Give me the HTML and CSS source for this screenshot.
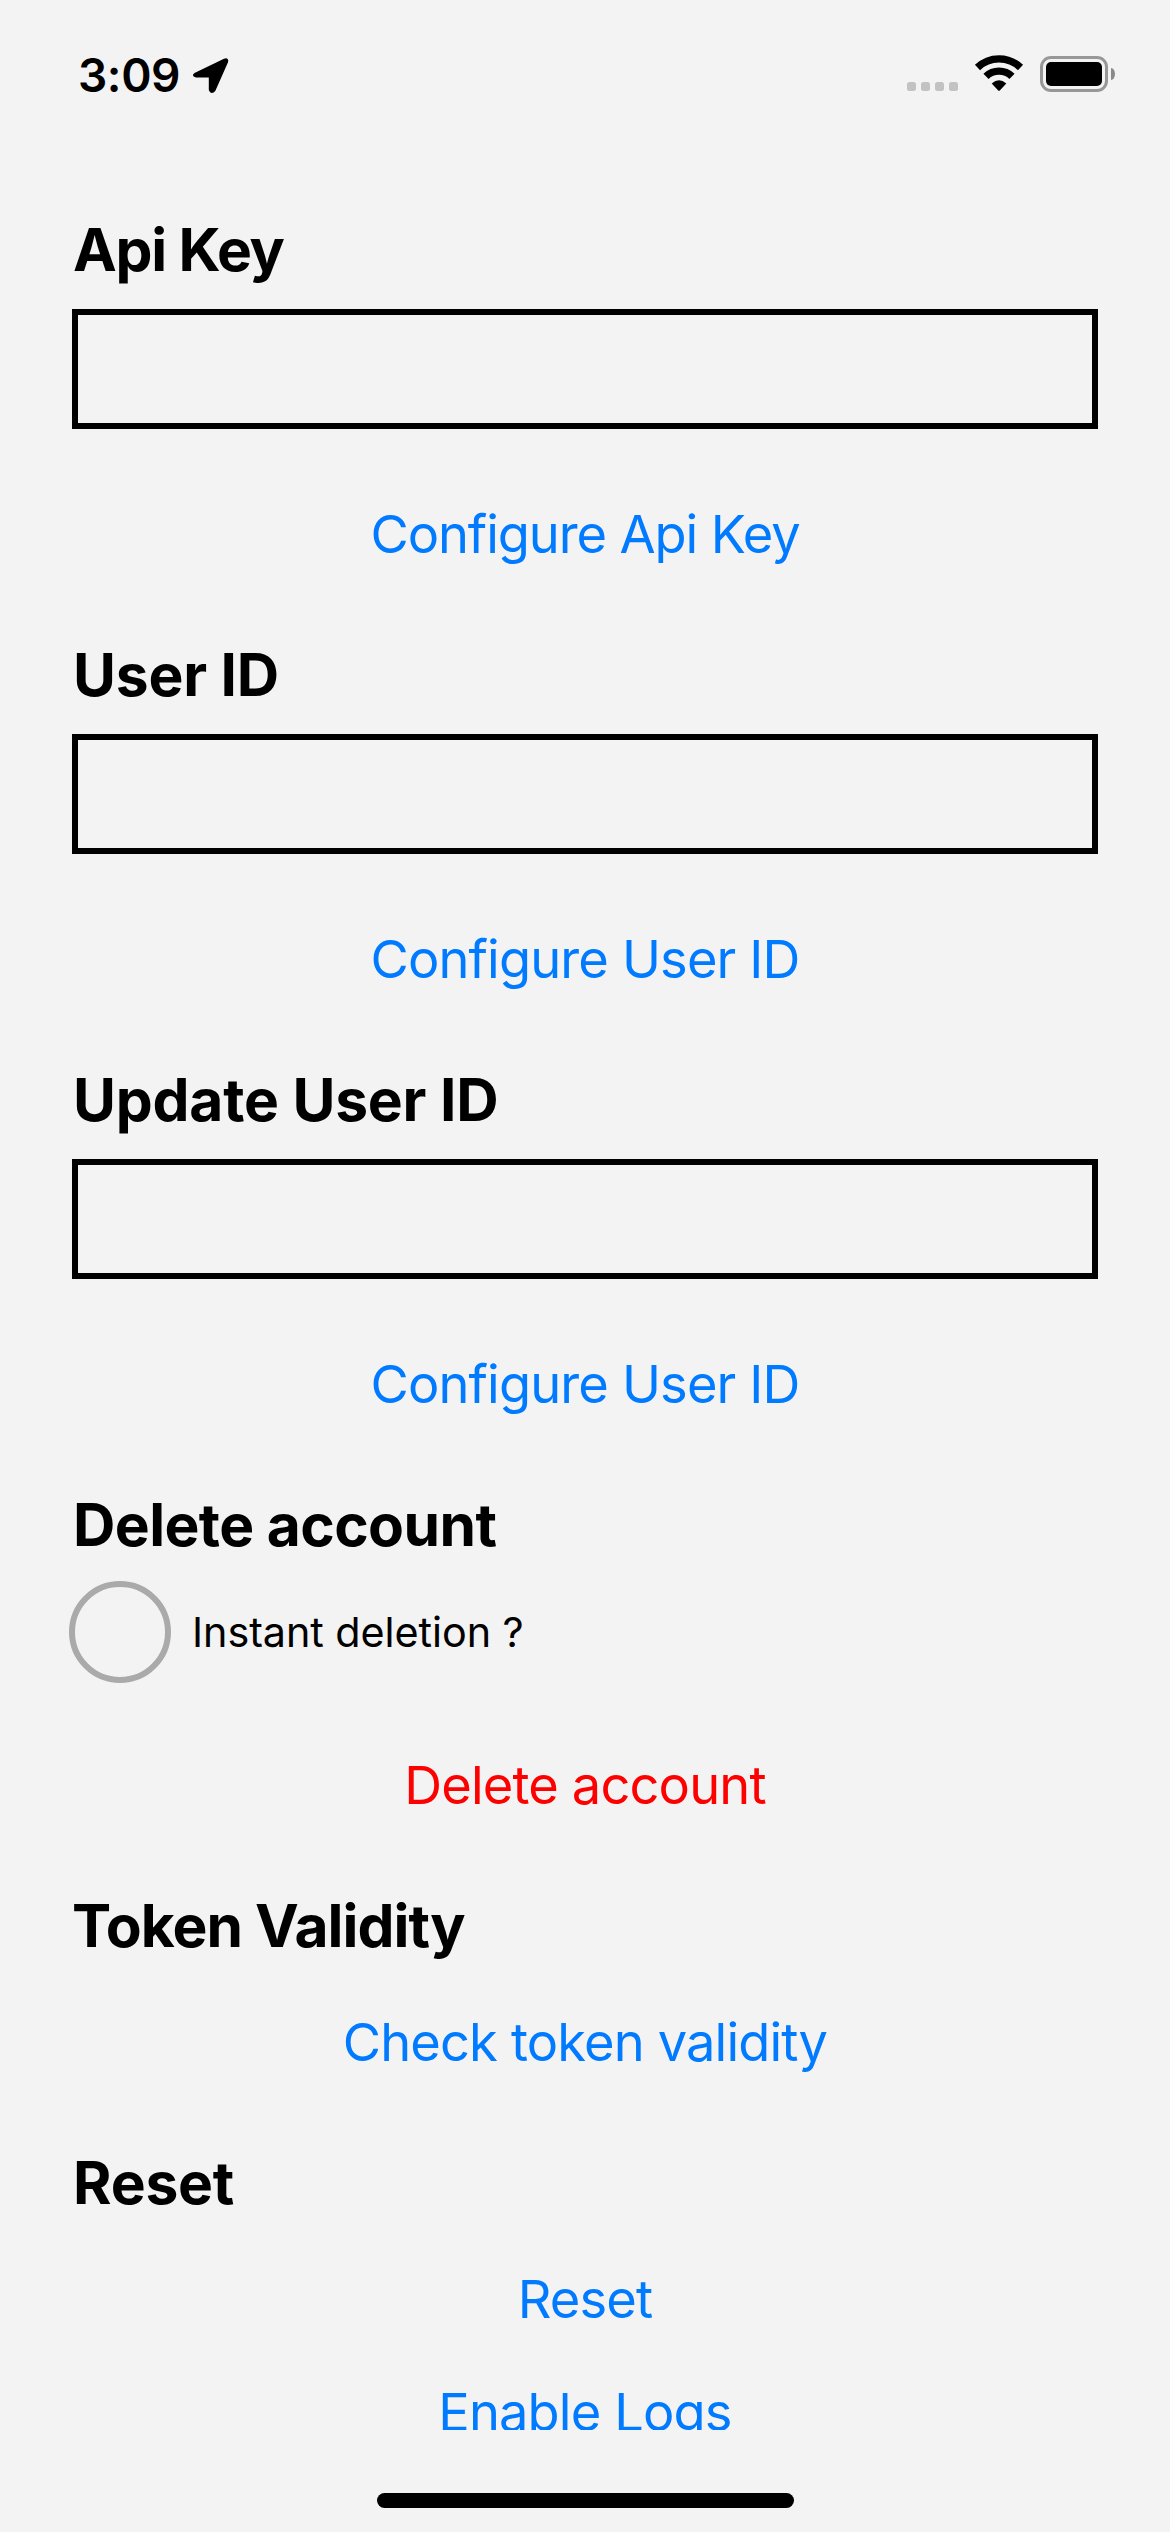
FILE: index.html
```html
<!DOCTYPE html>
<html lang="en">
<head>
<meta charset="utf-8">
<title>Account settings</title>
<link rel="stylesheet" href="styles.css">
</head>
<body>
<header class="status">
  <div class="clock">
    <span class="time">3:09</span>
    <svg class="location" width="38" height="38" viewBox="0 0 38 38"><path d="M3 17.2 32.5 2.8Q36 1.8 34.8 5L22.3 33.2Q19.5 36.6 18 32.8V19.2H4.2Q.8 18.6 3 17.2Z" stroke="#000" stroke-width="2.4" stroke-linejoin="round"/></svg>
  </div>
  <div class="indicators">
    <div class="dots"><i></i><i></i><i></i><i></i></div>
    <svg class="wifi" width="50" height="38" viewBox="0 0 50 38">
      <path d="M3.5 13.5A31 31 0 0 1 46.5 13.5M12 22.4A18.7 18.7 0 0 1 38 22.4" fill="none" stroke="#000" stroke-width="7.4"/>
      <path d="M17.7 29.5Q25 22.8 32.3 29.5L25.8 36.4Q25 37 24.2 36.4Z"/>
    </svg>
    <div class="battery"><div class="charge"></div></div>
    <div class="terminal"></div>
  </div>
</header>
<main class="content">
  <section>
    <h2 class="tight">Api Key</h2>
    <input class="field" type="text" aria-label="Api Key">
    <button class="action snug">Configure Api Key</button>
  </section>
  <section>
    <h2 class="wide">User ID</h2>
    <input class="field" type="text" aria-label="User ID">
    <button class="action">Configure User ID</button>
  </section>
  <section>
    <h2 class="wide">Update User ID</h2>
    <input class="field" type="text" aria-label="Update User ID">
    <button class="action">Configure User ID</button>
  </section>
  <section>
    <h2 class="medium">Delete account</h2>
    <label class="choice"><span class="circle"></span><span class="choice-text">Instant deletion ?</span></label>
    <button class="action danger">Delete account</button>
  </section>
  <section>
    <h2>Token Validity</h2>
    <button class="action compact">Check token validity</button>
  </section>
  <section>
    <h2 class="wide">Reset</h2>
    <button class="action compact">Reset</button>
    <button class="action stacked">Enable Logs</button>
  </section>
</main>
<footer class="home"><div class="home-bar"></div></footer>
</body>
</html>
```
FILE: styles.css
```css
* { box-sizing: border-box; }
body {
  margin: 0;
  width: 1170px;
  height: 2532px;
  overflow: hidden;
  display: flex;
  flex-direction: column;
  background: #f3f3f3;
  color: #000;
  font-family: Inter, "Liberation Sans", sans-serif;
}
.status {
  flex: none;
  height: 141px;
  padding: 45px 55px 0 78px;
  display: flex;
  justify-content: space-between;
  align-items: flex-start;
}
.clock { display: flex; }
.time {
  width: 114px;
  font-size: 46px;
  line-height: 60px;
  font-weight: 600;
  letter-spacing: -0.4px;
}
.location { margin-top: 12px; }
.indicators { display: flex; margin-top: 9px; }
.dots { display: flex; gap: 5px; margin: 28px 16px 0 0; }
.dots i { width: 9px; height: 9px; border-radius: 2.5px; background: #c2c2c2; }
.wifi { margin-right: 16px; }
.battery {
  width: 68px;
  height: 36px;
  margin-top: 2px;
  padding: 3px;
  border: 3px solid #979797;
  border-radius: 11px;
}
.charge { width: 56px; height: 24px; border-radius: 5px; background: #000; }
.terminal {
  width: 4px;
  height: 12px;
  margin: 14px 0 0 3px;
  border-radius: 0 4px 4px 0 / 0 6px 6px 0;
  background: #8a8a8a;
}
.content {
  flex: none;
  height: 2289px;
  padding: 73px 72px 0;
  overflow: hidden;
}
section { display: flex; flex-direction: column; margin-bottom: 73px; }
h2 {
  margin: 0;
  font-size: 58.7px;
  line-height: 72px;
  font-weight: 700;
  letter-spacing: -0.95px;
}
.tight { padding-left: 1px; letter-spacing: -1.3px; }
.medium { padding-left: 1px; letter-spacing: -0.6px; }
.wide { padding-left: 1px; letter-spacing: -0.2px; }
.field {
  height: 120px;
  margin: 23px 0 0;
  padding: 0 24px;
  border: 6px solid #000;
  border-radius: 0;
  background: transparent;
  font: inherit;
  font-size: 42px;
}
.action {
  align-self: center;
  margin: 73px 0 0;
  padding: 0;
  border: 0;
  background: none;
  color: #007aff;
  font-family: inherit;
  font-size: 52.4px;
  line-height: 64px;
  letter-spacing: -0.85px;
  white-space: nowrap;
}
.snug { letter-spacing: -1.1px; }
.danger { margin-top: 70px; color: #f00; }
.compact { margin-top: 48px; }
.stacked { margin-top: 49px; }
.choice { display: flex; align-items: center; margin: 20px 0 0 -3px; }
.circle {
  width: 102px;
  height: 102px;
  border: 6px solid #aaa;
  border-radius: 50%;
}
.choice-text {
  margin: -1px 0 0 21px;
  font-size: 41.3px;
  line-height: 50px;
  letter-spacing: -0.05px;
}
.home { padding-top: 63px; display: flex; justify-content: center; }
.home-bar { width: 417px; height: 15px; border-radius: 8px; background: #000; }
```
